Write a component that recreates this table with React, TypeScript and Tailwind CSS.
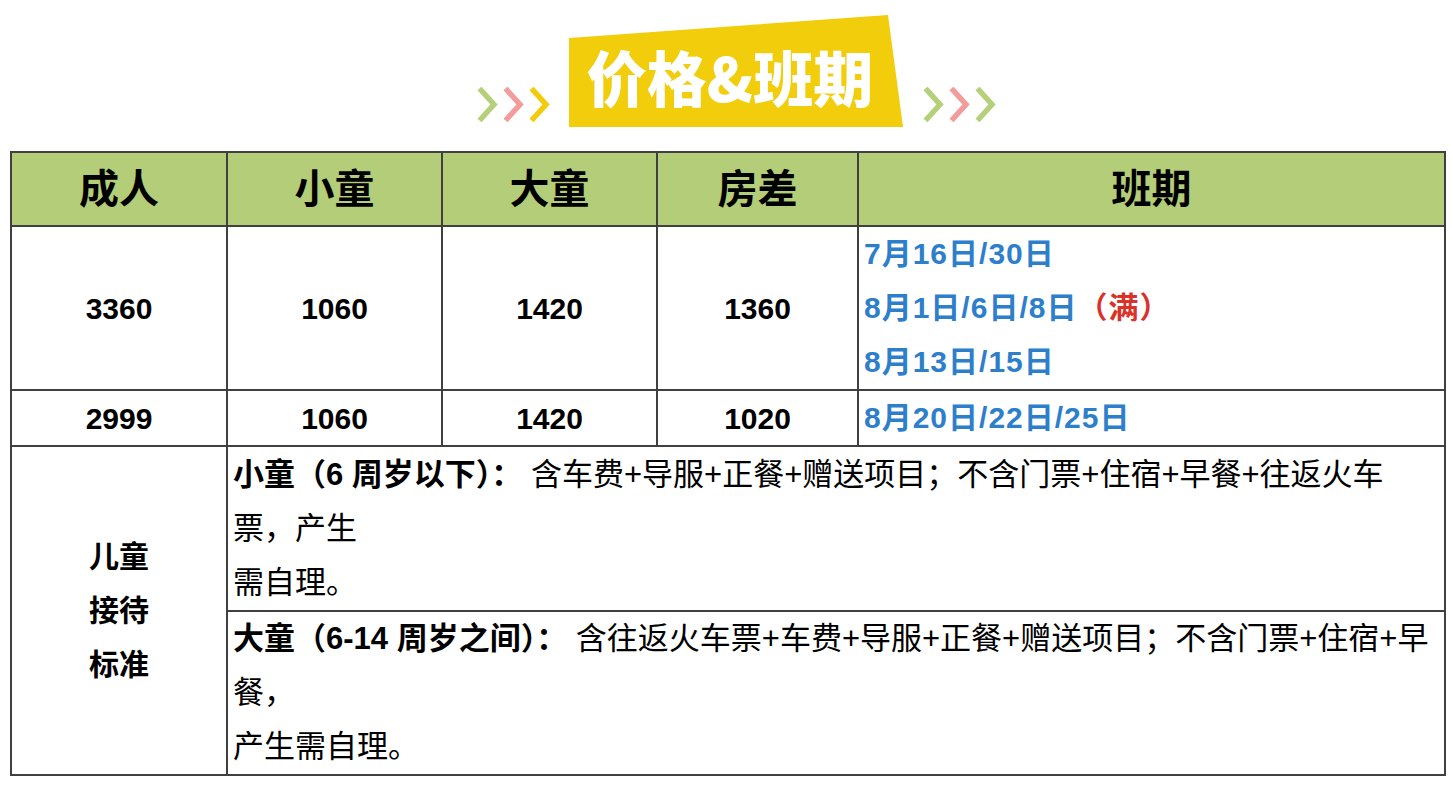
const font = "[font-family:'Liberation_Sans','Noto_Sans_CJK_SC',sans-serif]";

function Chevron({ color }: { color: string }) {
  return (
    <svg width="22" height="36" viewBox="0 0 22 36" className="block">
      <polyline
        points="2.5,1.5 17,17.5 2.5,33.5"
        fill="none"
        stroke={color}
        strokeWidth="5.5"
        strokeLinejoin="miter"
        strokeLinecap="butt"
      />
    </svg>
  );
}

const cell = "border-2 border-[#404040]";
const blue = "text-[#2e7fcb]";

export default function App() {
  return (
    <div className={`min-h-[791px] w-[1453px] bg-white ${font}`}>
      {/* title */}
      <div className="flex h-[151px] items-start pl-[477px] pt-[15px]">
        <div className="mt-[72px] flex gap-[4px]">
          <Chevron color="#b5d07a" />
          <Chevron color="#f29c9b" />
          <Chevron color="#f2cb0c" />
        </div>
        <div className="ml-[18px] flex h-[112px] w-[334px] items-center justify-center bg-[#f2cd0b] pr-[12px] pt-[10px] [clip-path:polygon(0_23px,319px_0,100%_100%,0_100%)]">
          <span className="font-['Noto_Sans_CJK_SC'] text-[60px] leading-none font-black text-white">
            价格&amp;班期
          </span>
        </div>
        <div className="mt-[72px] ml-[20px] flex gap-[4px]">
          <Chevron color="#b5d07a" />
          <Chevron color="#f29c9b" />
          <Chevron color="#b5d07a" />
        </div>
      </div>

      {/* table */}
      <table className="ml-[10px] w-[1434px] table-fixed border-collapse border-2 border-[#404040] text-black">
        <colgroup>
          <col className="w-[216px]" />
          <col className="w-[215px]" />
          <col className="w-[215px]" />
          <col className="w-[201px]" />
          <col className="w-[587px]" />
        </colgroup>
        <tbody>
          <tr className="h-[74px] bg-[#b4cd78] text-[40px] font-bold">
            <td className={`${cell} text-center`}>成人</td>
            <td className={`${cell} text-center`}>小童</td>
            <td className={`${cell} text-center`}>大童</td>
            <td className={`${cell} text-center`}>房差</td>
            <td className={`${cell} text-center`}>班期</td>
          </tr>
          <tr className="h-[163px] text-[30px] font-bold">
            <td className={`${cell} text-center`}>3360</td>
            <td className={`${cell} text-center`}>1060</td>
            <td className={`${cell} text-center`}>1420</td>
            <td className={`${cell} text-center`}>1360</td>
            <td className={`${cell} pl-[5px] text-[30px] leading-[54px] tracking-[1px] ${blue}`}>
              <div>7月16日/30日</div>
              <div>
                8月1日/6日/8日<span className="text-[#d8322a]">（满）</span>
              </div>
              <div>8月13日/15日</div>
            </td>
          </tr>
          <tr className="h-[56px] text-[30px] font-bold">
            <td className={`${cell} text-center`}>2999</td>
            <td className={`${cell} text-center`}>1060</td>
            <td className={`${cell} text-center`}>1420</td>
            <td className={`${cell} text-center`}>1020</td>
            <td className={`${cell} pl-[5px] text-[30px] leading-[54px] tracking-[1px] ${blue}`}>
              8月20日/22日/25日
            </td>
          </tr>
          <tr className="h-[165px] text-[31px] leading-[54px]">
            <td rowSpan={2} className={`${cell} text-center text-[30px] font-bold`}>
              <div>儿童</div>
              <div>接待</div>
              <div>标准</div>
            </td>
            <td colSpan={4} className={`${cell} whitespace-nowrap pl-[5px]`}>
              <div>
                <span className="font-bold">小童（6 周岁以下）：</span> 含车费+导服+正餐+赠送项目；不含门票+住宿+早餐+往返火车
              </div>
              <div>票，产生</div>
              <div>需自理。</div>
            </td>
          </tr>
          <tr className="h-[163px] text-[31px] leading-[54px]">
            <td colSpan={4} className={`${cell} whitespace-nowrap pl-[5px]`}>
              <div>
                <span className="font-bold">大童（6-14 周岁之间）：</span> 含往返火车票+车费+导服+正餐+赠送项目；不含门票+住宿+早
              </div>
              <div>餐，</div>
              <div>产生需自理。</div>
            </td>
          </tr>
        </tbody>
      </table>
    </div>
  );
}
